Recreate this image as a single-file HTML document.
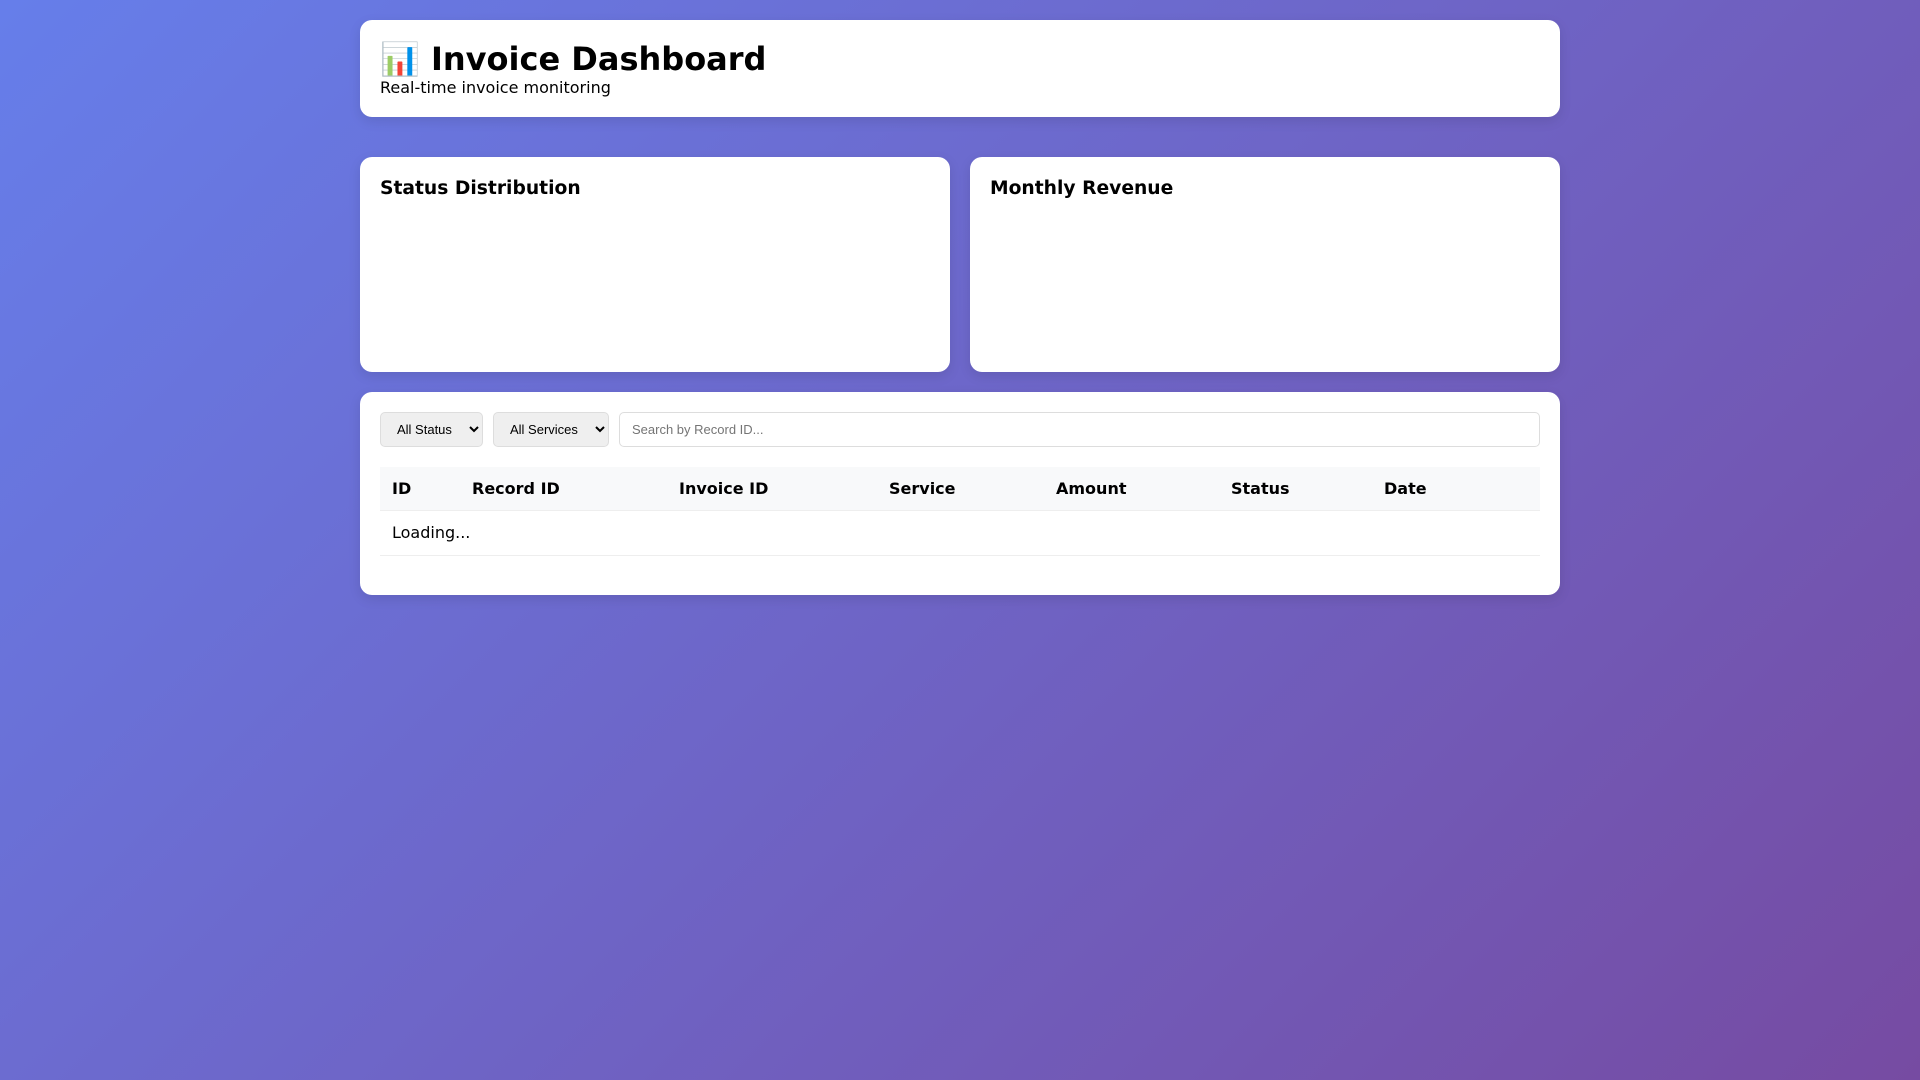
<!DOCTYPE html>
<html><head><meta charset="utf-8"><style>
*{box-sizing:border-box}
body{margin:0;width:1920px;height:1080px;background:linear-gradient(135deg,#667eea 0%,#764ba2 100%);font-family:"DejaVu Sans","Liberation Sans",sans-serif;color:#000;overflow:hidden}
.wrap{width:1200px;margin:0 auto;padding-top:20px}
.card{background:#fff;border-radius:12px;box-shadow:0 4px 12px rgba(0,0,0,.1);padding:20px}
.hdr{height:97px;padding-top:21px}
h1{margin:0;font-size:32px;line-height:37px;font-weight:bold}
.sub{font-size:16px;line-height:19px}
.charts{display:flex;gap:20px;margin-top:40px}
.charts .card{flex:1;height:215px}
h3{margin:1px 0 0;font-size:18.7px;line-height:22px;font-weight:bold}
.tbl{margin-top:20px;height:203px}
.ctl{display:flex;gap:10px;height:35px}
select{height:35px;border:1px solid #ddd;border-radius:5px;background:#efefef;font:13px "Liberation Sans",sans-serif;padding:0 6px 0 12px;color:#000}
input{flex:1;height:35px;border:1px solid #ddd;border-radius:5px;font:13px "Liberation Sans",sans-serif;padding:0 12px}
input::placeholder{color:#757575}
table{width:100%;border-collapse:collapse;margin-top:20px;font-size:16px}
th{background:#f8f9fa;text-align:left;height:43px;padding:0 12px;border-bottom:1px solid #eee}
td{height:45px;padding:0 12px;border-bottom:1px solid #eee}
</style></head><body><div class="wrap">
<div class="card hdr"><h1>📊 Invoice Dashboard</h1><div class="sub">Real-time invoice monitoring</div></div>
<div class="charts"><div class="card"><h3>Status Distribution</h3></div><div class="card"><h3>Monthly Revenue</h3></div></div>
<div class="card tbl">
<div class="ctl"><select style="width:103px"><option>All Status</option></select><select style="width:116px"><option>All Services</option></select><input placeholder="Search by Record ID..."></div>
<table><tr><th style="width:80px">ID</th><th style="width:207px">Record ID</th><th style="width:210px">Invoice ID</th><th style="width:167px">Service</th><th style="width:175px">Amount</th><th style="width:153px">Status</th><th>Date</th></tr>
<tr><td colspan="7">Loading...</td></tr></table>
</div></div></body></html>
